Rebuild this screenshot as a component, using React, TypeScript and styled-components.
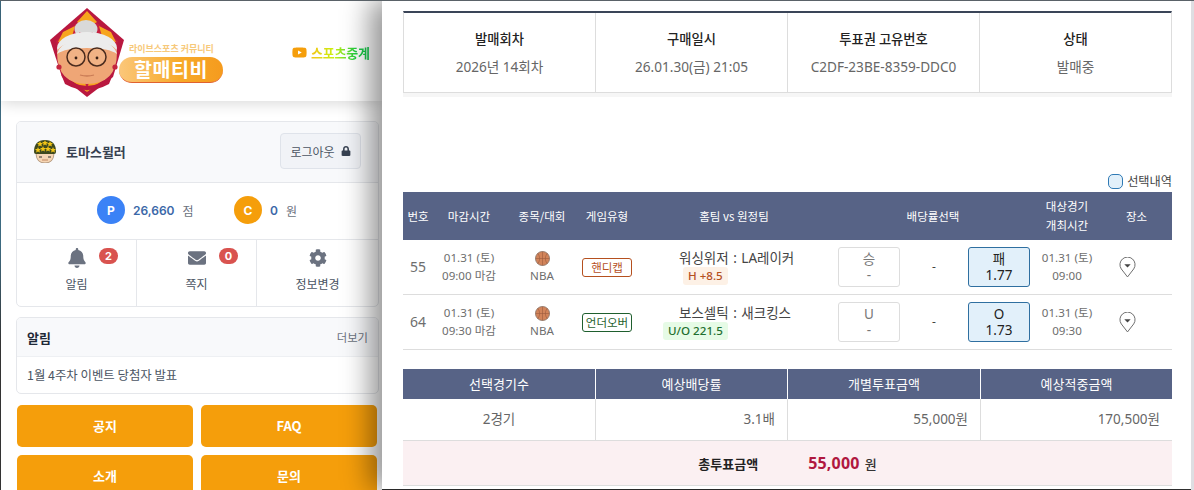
import React from 'react';
import styled, { createGlobalStyle } from 'styled-components';
import { FaBell, FaEnvelope, FaCog, FaLock, FaYoutube } from 'react-icons/fa';

const Global = createGlobalStyle`
  html, body { margin: 0; padding: 0; width: 1194px; height: 490px; overflow: hidden; background: #fff; }
  * { box-sizing: border-box; }
  body { font-family: Inter, "Noto Sans CJK KR", sans-serif; color: #333; }
`;

const Page = styled.div`
  width: 1194px; height: 490px; display: flex; overflow: hidden; padding-left: 1px;
  background: linear-gradient(180deg, #3d6a80 0%, #3d6a80 50%, #333 70%, #333 100%);
  border-top: 1px solid #5a6268;
`;
const Sidebar = styled.aside`
  width: 381px; flex: none; height: 600px; background: #fff; display: flex; flex-direction: column;
`;
const Header = styled.header`
  height: 100px; display: flex; align-items: center; background: #fff; padding: 0 0 0 48px;
  box-shadow: 0 2px 14px rgba(0,0,0,.16); position: relative;
`;
const LogoWrap = styled.div` position: relative; width: 175px; height: 90px; flex: none; `;
const LogoSub = styled.span`
  position: absolute; left: 80px; top: 36px; font-size: 9px; line-height: 13px; font-weight: 700; color: #f7c97a; white-space: nowrap;
  font-family: "Noto Sans CJK KR", sans-serif;
`;
const LogoPill = styled.span`
  position: absolute; left: 70px; top: 51px; width: 104px; height: 26px; border-radius: 13px;
  background: linear-gradient(90deg, #fbc77a, #f7a928 60%, #f59b1e); border-bottom: 1.5px solid #e0612f;
  color: #fff; font: 700 19.5px/24px "Noto Sans CJK KR", sans-serif; text-align: center; letter-spacing: .6px;
`;
const Live = styled.div`
  margin-left: 68px; margin-top: 2px; display: flex; align-items: center; gap: 4px; font-size: 13px; font-weight: 700;
  font-family: "Noto Sans CJK KR", sans-serif; white-space: nowrap; letter-spacing: -.2px;
  svg { color: #f59e0b; font-size: 15px; }
`;
const LiveText = styled.span`
  background: linear-gradient(90deg, #f5c518, #c8f010 40%, #20d040 75%, #14c850);
  -webkit-background-clip: text; background-clip: text; color: transparent;
`;
const Content = styled.div` padding: 20px 3px 0 15px; display: flex; flex-direction: column; `;
const Card = styled.section`
  border: 1px solid #e5e7eb; border-radius: 5px; overflow: hidden; background: #fff;
`;
const UserRow = styled.div`
  height: 61px; background: #f8f9fb; border-bottom: 1px solid #e5e7eb; display: flex; align-items: center;
  padding: 0 17px 2px 16px;
`;
const UserName = styled.span` margin-left: 9px; font-size: 13px; font-weight: 700; color: #374151; flex: 1; font-family: "Noto Sans CJK KR", sans-serif; `;
const Logout = styled.button`
  width: 81px; height: 36px; border: 1px solid #dfe3ea; border-radius: 4px; background: #f1f3f7; color: #4b5563;
  font: 400 12px "Noto Sans CJK KR", sans-serif; display: flex; align-items: center; justify-content: center; gap: 6px; padding: 0;
  svg { font-size: 10px; color: #374151; }
`;
const Stats = styled.div`
  height: 57px; border-bottom: 1px solid #e5e7eb; display: flex; align-items: center; padding: 0 0 2px 80px;
`;
const Stat = styled.div<{ $w: number }>` display: flex; align-items: center; width: ${p => p.$w}px; `;
const Coin = styled.span<{ $c: string }>`
  width: 28px; height: 28px; border-radius: 50%; background: ${p => p.$c}; color: #fff; font-size: 12px; font-weight: 700;
  display: flex; align-items: center; justify-content: center; margin-right: 8px;
`;
const Amount = styled.span` font-size: 12px; font-weight: 600; color: #3b68a8; margin-right: 8px; `;
const Unit = styled.span` font-size: 12px; color: #6b7280; font-family: "Noto Sans CJK KR", sans-serif; `;
const Nav = styled.div` display: grid; grid-template-columns: 119px 120px 1fr; height: 66px; `;
const NavItem = styled.div`
  position: relative; display: flex; flex-direction: column; align-items: center; padding-top: 8px; color: #4b5563;
  font: 400 12px/17px "Noto Sans CJK KR", sans-serif; & + & { border-left: 1px solid #e5e7eb; }
  svg { font-size: 18px; color: #6b7280; margin-bottom: 7px; height: 20px; }
`;
const Badge = styled.span`
  position: absolute; left: 82px; top: 8px; width: 19px; height: 16px; border-radius: 8px; background: #d9534f; color: #fff;
  font: 700 11px/16px Inter, sans-serif; text-align: center;
`;
const NoticeCard = styled(Card)` margin-top: 10px; `;
const NoticeHead = styled.div`
  height: 39px; background: #f8f9fb; border-bottom: 1px solid #eef0f3; display: flex; align-items: center; justify-content: space-between;
  padding: 0 10px; font-family: "Noto Sans CJK KR", sans-serif;
`;
const NoticeTitle = styled.span` font-size: 13px; font-weight: 700; color: #1f2937; `;
const More = styled.span` font-size: 11.3px; color: #6b7280; `;
const NoticeBody = styled.div` height: 36px; padding: 0 10px; display: flex; align-items: center; font: 400 12.4px "Noto Sans CJK KR", sans-serif; color: #4b5563; `;
const QuickGrid = styled.div` margin-top: 11px; display: grid; grid-template-columns: 176px 176px; gap: 8px; padding-left: 1px; `;
const Quick = styled.div`
  height: 42px; background: #f59e0b; border-radius: 5px; color: #fff; font: 700 13px/42px "Noto Sans CJK KR", sans-serif; text-align: center;
`;

const Drawer = styled.main`
  position: relative; flex: 1; height: 100%; background: #fff; padding: 10px 0 0 21px; margin-top: -1px;
  box-shadow: -12px 0 26px rgba(0,0,0,.42); border-top: 1px solid #666;
  font-family: "Noto Sans", "Noto Sans CJK KR", sans-serif; color: #555;
`;
const Rail = styled.div` width: 3px; flex: none; background: #dedee2; position: relative; `;
const InfoGrid = styled.div`
  display: grid; grid-template-columns: 191px 192px 192px 192px; width: 769px; height: 82px; border-top: 2px solid #3a4558;
  border-left: 1px solid #ddd; border-right: 1px solid #ddd; border-bottom: 1px solid #ddd; box-shadow: 0 4px 0 #f6f6f6;
`;
const InfoCell = styled.div`
  display: flex; flex-direction: column; align-items: center; justify-content: center; gap: 10px; font-size: 13px;
  & + & { border-left: 1px solid #ddd; }
`;
const InfoLabel = styled.span` font-weight: 500; color: #222; font-size: 13.3px; font-family: "Noto Sans CJK KR", sans-serif; `;
const InfoValue = styled.span` color: #666; font-size: 13.6px; line-height: 18px; `;
const Legend = styled.div`
  margin-top: 77px; width: 769px; height: 22px; display: flex; align-items: center; justify-content: flex-end; gap: 4px; font-size: 12.2px; color: #444;
  font-family: "Noto Sans CJK KR", sans-serif;
`;
const Swatch = styled.span` width: 15px; height: 15px; border-radius: 5px; border: 1px solid #2f7ab5; background: #e2f0fa; `;
const Table = styled.table`
  width: 769px; border-collapse: separate; border-spacing: 0; table-layout: fixed; font-size: 12px;
`;
const Th = styled.th`
  height: 48px; background: #576386; color: #fff; font: 400 11.5px/19px "Noto Sans CJK KR", sans-serif; text-align: center; padding: 0;
`;
const Td = styled.td<{ $size?: number }>`
  height: 55px; border-bottom: 1px solid #ddd; text-align: center; padding: 0; color: #6e6e6e; font-size: ${p => p.$size ?? 11.6}px; line-height: 18px;
  vertical-align: middle;
`;
const Ball = styled.svg` display: block; margin: 2px auto 1px; `;
const TypeTag = styled.span<{ $c: string }>`
  display: inline-block; width: 50px; height: 19px; border: 1px solid ${p => p.$c}; border-radius: 3px; color: ${p => p.$c};
  font: 400 11.5px/17px "Noto Sans CJK KR", sans-serif;
`;
const Match = styled.div` display: flex; flex-direction: column; align-items: flex-start; padding-left: 44px; `;
const MatchName = styled.span` font-size: 13.5px; line-height: 18px; color: #444; font-family: "Noto Sans", "Noto Sans CJK KR", sans-serif; white-space: nowrap; word-spacing: 1px; `;
const Handicap = styled.span<{ $bg: string; $c: string; $ml: number }>`
  margin-left: ${p => p.$ml}px; height: 18px; padding: 0 5px; background: ${p => p.$bg}; color: ${p => p.$c}; border-radius: 3px;
  font-size: 11.6px; line-height: 18px; font-weight: 500; white-space: nowrap;
`;
const Odds = styled.div` display: grid; grid-template-columns: 62px 68px 62px; padding-left: 5px; align-items: center; `;
const OddBtn = styled.div<{ $on?: boolean }>`
  height: 40px; border-radius: 3px; border: 1px solid ${p => (p.$on ? '#2f6fa0' : '#ddd')}; background: ${p => (p.$on ? '#e2f0fa' : '#fff')};
  color: ${p => (p.$on ? '#222' : '#777')}; font-size: 13.5px; line-height: 16px; display: flex; flex-direction: column; justify-content: center;
  align-items: center;
`;
const Dash = styled.span` color: #444; font-size: 12px; `;
const Pin = styled.svg` display: block; margin: 0 36px 0 auto; `;
const Summary = styled.div` margin-top: 19px; width: 769px; `;
const SumRow = styled.div` display: grid; grid-template-columns: 192px 192px 193px 192px; `;
const SumHead = styled.div`
  height: 30px; background: #576386; color: #fff; font: 400 13px/30px "Noto Sans CJK KR", sans-serif; text-align: center;
  & + & { border-left: 1px solid #fff; }
`;
const SumCell = styled.div<{ $right?: boolean }>`
  height: 42px; border-bottom: 1px solid #ddd; font: 400 13.5px/40px "Noto Sans", "Noto Sans CJK KR", sans-serif; color: #666;
  text-align: ${p => (p.$right ? 'right' : 'center')}; padding: 0 12px; & + & { border-left: 1px solid #ddd; }
`;
const Total = styled.div`
  height: 45px; background: #fbf0f2; border-bottom: 1px solid #ddd; display: flex; align-items: center; justify-content: center;
  font-family: "Noto Sans CJK KR", sans-serif; font-size: 13px;
`;
const TotalLabel = styled.span` font-weight: 700; color: #222; margin-right: 50px; `;
const TotalValue = styled.span` font-weight: 700; color: #b0183f; font-size: 16px; letter-spacing: .2px; margin-right: 5px; font-family: "Noto Sans", sans-serif; `;
const TotalUnit = styled.span` color: #333; font-weight: 500; `;

const LogoArt = () => (
  <svg width="78" height="92" viewBox="0 0 78 92" style={{ position: 'absolute', left: 0, top: 0 }}>
    <path d="M38 2 L75 34 L64 71 L38 91 L13 71 L1 34 Z" fill="#b9183f" />
    <path d="M38 8 L69 35 L60 68 L38 85 L17 68 L7 35 Z" fill="#c7203f" />
    <path d="M38 5 L48 16 L38 22 L28 16 Z M14 26 L26 20 L22 34 L9 36 Z M62 26 L50 20 L54 34 L67 36 Z" fill="#f7a51d" />
    <path d="M22 74 L36 75 L38 86 Z M54 74 L40 75 L38 86 Z" fill="#f7a51d" />
    <ellipse cx="37" cy="23" rx="11.5" ry="9" fill="#d9d9d9" />
    <path d="M30 27 Q37 30 44 27" stroke="#c41e48" strokeWidth="1.4" fill="none" />
    <ellipse cx="38" cy="42" rx="30" ry="16" fill="#ececec" />
    <path d="M8 46 Q8 78 38 78 Q68 78 68 46 Q66 38 50 37 Q38 40 26 37 Q10 38 8 46 Z" fill="#efa676" />
    <path d="M8 48 Q12 36 26 36 Q38 40 50 36 Q64 36 68 48 Q60 42 38 42 Q16 42 8 48 Z" fill="#ececec" />
    <path d="M12 68 Q38 92 64 68 L60 78 Q38 90 16 78 Z" fill="#b9183f" />
    <circle cx="10" cy="61" r="2.6" fill="#c4253f" />
    <circle cx="66" cy="61" r="2.6" fill="#c4253f" />
    <circle cx="27" cy="51" r="9" fill="#f6c8a3" fillOpacity=".35" stroke="#4a2b1e" strokeWidth="1.5" />
    <circle cx="48" cy="51" r="9" fill="#f6c8a3" fillOpacity=".35" stroke="#4a2b1e" strokeWidth="1.5" />
    <circle cx="27" cy="52" r="1.4" fill="#3a2015" />
    <circle cx="48" cy="52" r="1.4" fill="#3a2015" />
    <path d="M31 69 Q38 71 45 69" stroke="#c97b55" strokeWidth="1.3" fill="none" />
  </svg>
);

const Avatar = () => (
  <svg width="24" height="24" viewBox="0 0 24 24">
    <path d="M3 14 Q3 24 12 24 Q21 24 21 14 Z" fill="#f6d6b4" stroke="#8a6d50" strokeWidth=".6" />
    <path d="M1 13 Q1 1 12 1 Q23 1 23 13 Q23 15 21 15 L3 15 Q1 15 1 13 Z" fill="#3f4a1e" />
    {[[7, 5], [12, 4], [17, 5], [5, 11], [10, 10], [15, 10], [20, 11]].map(([x, y]) => (
      <path key={`${x}-${y}`} transform={`translate(${x} ${y})`} d="M0 -3 L.9 -1 L3 -.9 L1.4 .5 L1.9 2.6 L0 1.5 L-1.9 2.6 L-1.4 .5 L-3 -.9 L-.9 -1 Z" fill="#f2c517" />
    ))}
    <path d="M6 18 h3 M15 18 h3" stroke="#333" strokeWidth="1" />
    <path d="M9 21 h6" stroke="#b5734f" strokeWidth=".8" />
  </svg>
);

const Basketball = () => (
  <Ball width="15" height="15" viewBox="0 0 16 16">
    <circle cx="8" cy="8" r="7.5" fill="#d2845a" stroke="#8a7468" strokeWidth=".9" />
    <path d="M8 .5 V15.5 M.5 8 H15.5 M3 2.5 Q7 8 3 13.5 M13 2.5 Q9 8 13 13.5" stroke="#99593d" strokeWidth=".6" fill="none" />
  </Ball>
);

const PinIcon = () => (
  <Pin width="17" height="21" viewBox="0 0 18 22">
    <path d="M9 21 L2.4 12.5 A8 8 0 1 1 15.6 12.5 Z" fill="#fff" stroke="#666" strokeWidth="1" strokeLinejoin="round" />
    <path d="M5.6 7.5 H12.4 L9 11 Z" fill="#444" />
  </Pin>
);

const Row = (p: {
  no: string; close: string; kind: string; kindColor: string; name: string; tag: string; tagBg: string; tagC: string; tagMl: number;
  l: string; r: string; odd: string; time: string;
}) => (
  <tr>
    <Td $size={14}>{p.no}</Td>
    <Td>01.31 (토)<br />{p.close} 마감</Td>
    <Td><Basketball />NBA</Td>
    <Td><TypeTag $c={p.kindColor}>{p.kind}</TypeTag></Td>
    <Td>
      <Match>
        <MatchName>{p.name}</MatchName>
        <Handicap $bg={p.tagBg} $c={p.tagC} $ml={p.tagMl}>{p.tag}</Handicap>
      </Match>
    </Td>
    <Td>
      <Odds>
        <OddBtn>{p.l}<span>-</span></OddBtn>
        <Dash>-</Dash>
        <OddBtn $on>{p.r}<span>{p.odd}</span></OddBtn>
      </Odds>
    </Td>
    <Td>01.31 (토)<br />{p.time}</Td>
    <Td><PinIcon /></Td>
  </tr>
);

export default function App() {
  return (
    <Page>
      <Global />
      <Sidebar>
        <Header>
          <LogoWrap>
            <LogoArt />
            <LogoSub>라이브스포츠 커뮤니티</LogoSub>
            <LogoPill>할매티비</LogoPill>
          </LogoWrap>
          <Live><FaYoutube /><LiveText>스포츠중계</LiveText></Live>
        </Header>
        <Content>
          <Card>
            <UserRow>
              <Avatar />
              <UserName>토마스뮐러</UserName>
              <Logout>로그아웃 <FaLock /></Logout>
            </UserRow>
            <Stats>
              <Stat $w={137}><Coin $c="#3b82f6">P</Coin><Amount>26,660</Amount><Unit>점</Unit></Stat>
              <Stat $w={100}><Coin $c="#f59e0b">C</Coin><Amount>0</Amount><Unit>원</Unit></Stat>
            </Stats>
            <Nav>
              <NavItem><FaBell />알림<Badge>2</Badge></NavItem>
              <NavItem><FaEnvelope />쪽지<Badge>0</Badge></NavItem>
              <NavItem><FaCog />정보변경</NavItem>
            </Nav>
          </Card>
          <NoticeCard>
            <NoticeHead><NoticeTitle>알림</NoticeTitle><More>더보기</More></NoticeHead>
            <NoticeBody>1월 4주차 이벤트 당첨자 발표</NoticeBody>
          </NoticeCard>
          <QuickGrid>
            <Quick>공지</Quick><Quick>FAQ</Quick><Quick>소개</Quick><Quick>문의</Quick>
          </QuickGrid>
        </Content>
      </Sidebar>
      <Drawer>
        <InfoGrid>
          <InfoCell><InfoLabel>발매회차</InfoLabel><InfoValue>2026년 14회차</InfoValue></InfoCell>
          <InfoCell><InfoLabel>구매일시</InfoLabel><InfoValue>26.01.30(금) 21:05</InfoValue></InfoCell>
          <InfoCell><InfoLabel>투표권 고유번호</InfoLabel><InfoValue>C2DF-23BE-8359-DDC0</InfoValue></InfoCell>
          <InfoCell><InfoLabel>상태</InfoLabel><InfoValue>발매중</InfoValue></InfoCell>
        </InfoGrid>
        <Legend><Swatch />선택내역</Legend>
        <Table>
          <colgroup>
            <col width="30" /><col width="72" /><col width="74" /><col width="56" /><col width="198" /><col width="200" /><col width="68" /><col width="71" />
          </colgroup>
          <thead>
            <tr>
              <Th>번호</Th><Th>마감시간</Th><Th>종목/대회</Th><Th>게임유형</Th><Th>홈팀 vs 원정팀</Th><Th>배당률선택</Th><Th>대상경기<br />개최시간</Th><Th>장소</Th>
            </tr>
          </thead>
          <tbody>
            <Row no="55" close="09:00" kind="핸디캡" kindColor="#b5501f" name="워싱위저 : LA레이커" tag="H +8.5" tagBg="#fdf1e6" tagC="#b5501f" tagMl={4} l="승" r="패" odd="1.77" time="09:00" />
            <Row no="64" close="09:30" kind="언더오버" kindColor="#1f5f2e" name="보스셀틱 : 새크킹스" tag="U/O 221.5" tagBg="#e6fbe6" tagC="#1f6f30" tagMl={-16} l="U" r="O" odd="1.73" time="09:30" />
          </tbody>
        </Table>
        <Summary>
          <SumRow>
            <SumHead>선택경기수</SumHead><SumHead>예상배당률</SumHead><SumHead>개별투표금액</SumHead><SumHead>예상적중금액</SumHead>
          </SumRow>
          <SumRow>
            <SumCell>2경기</SumCell><SumCell $right>3.1배</SumCell><SumCell $right>55,000원</SumCell><SumCell $right>170,500원</SumCell>
          </SumRow>
          <Total><TotalLabel>총투표금액</TotalLabel><TotalValue>55,000</TotalValue><TotalUnit>원</TotalUnit></Total>
        </Summary>
      </Drawer>
      <Rail />
    </Page>
  );
}
